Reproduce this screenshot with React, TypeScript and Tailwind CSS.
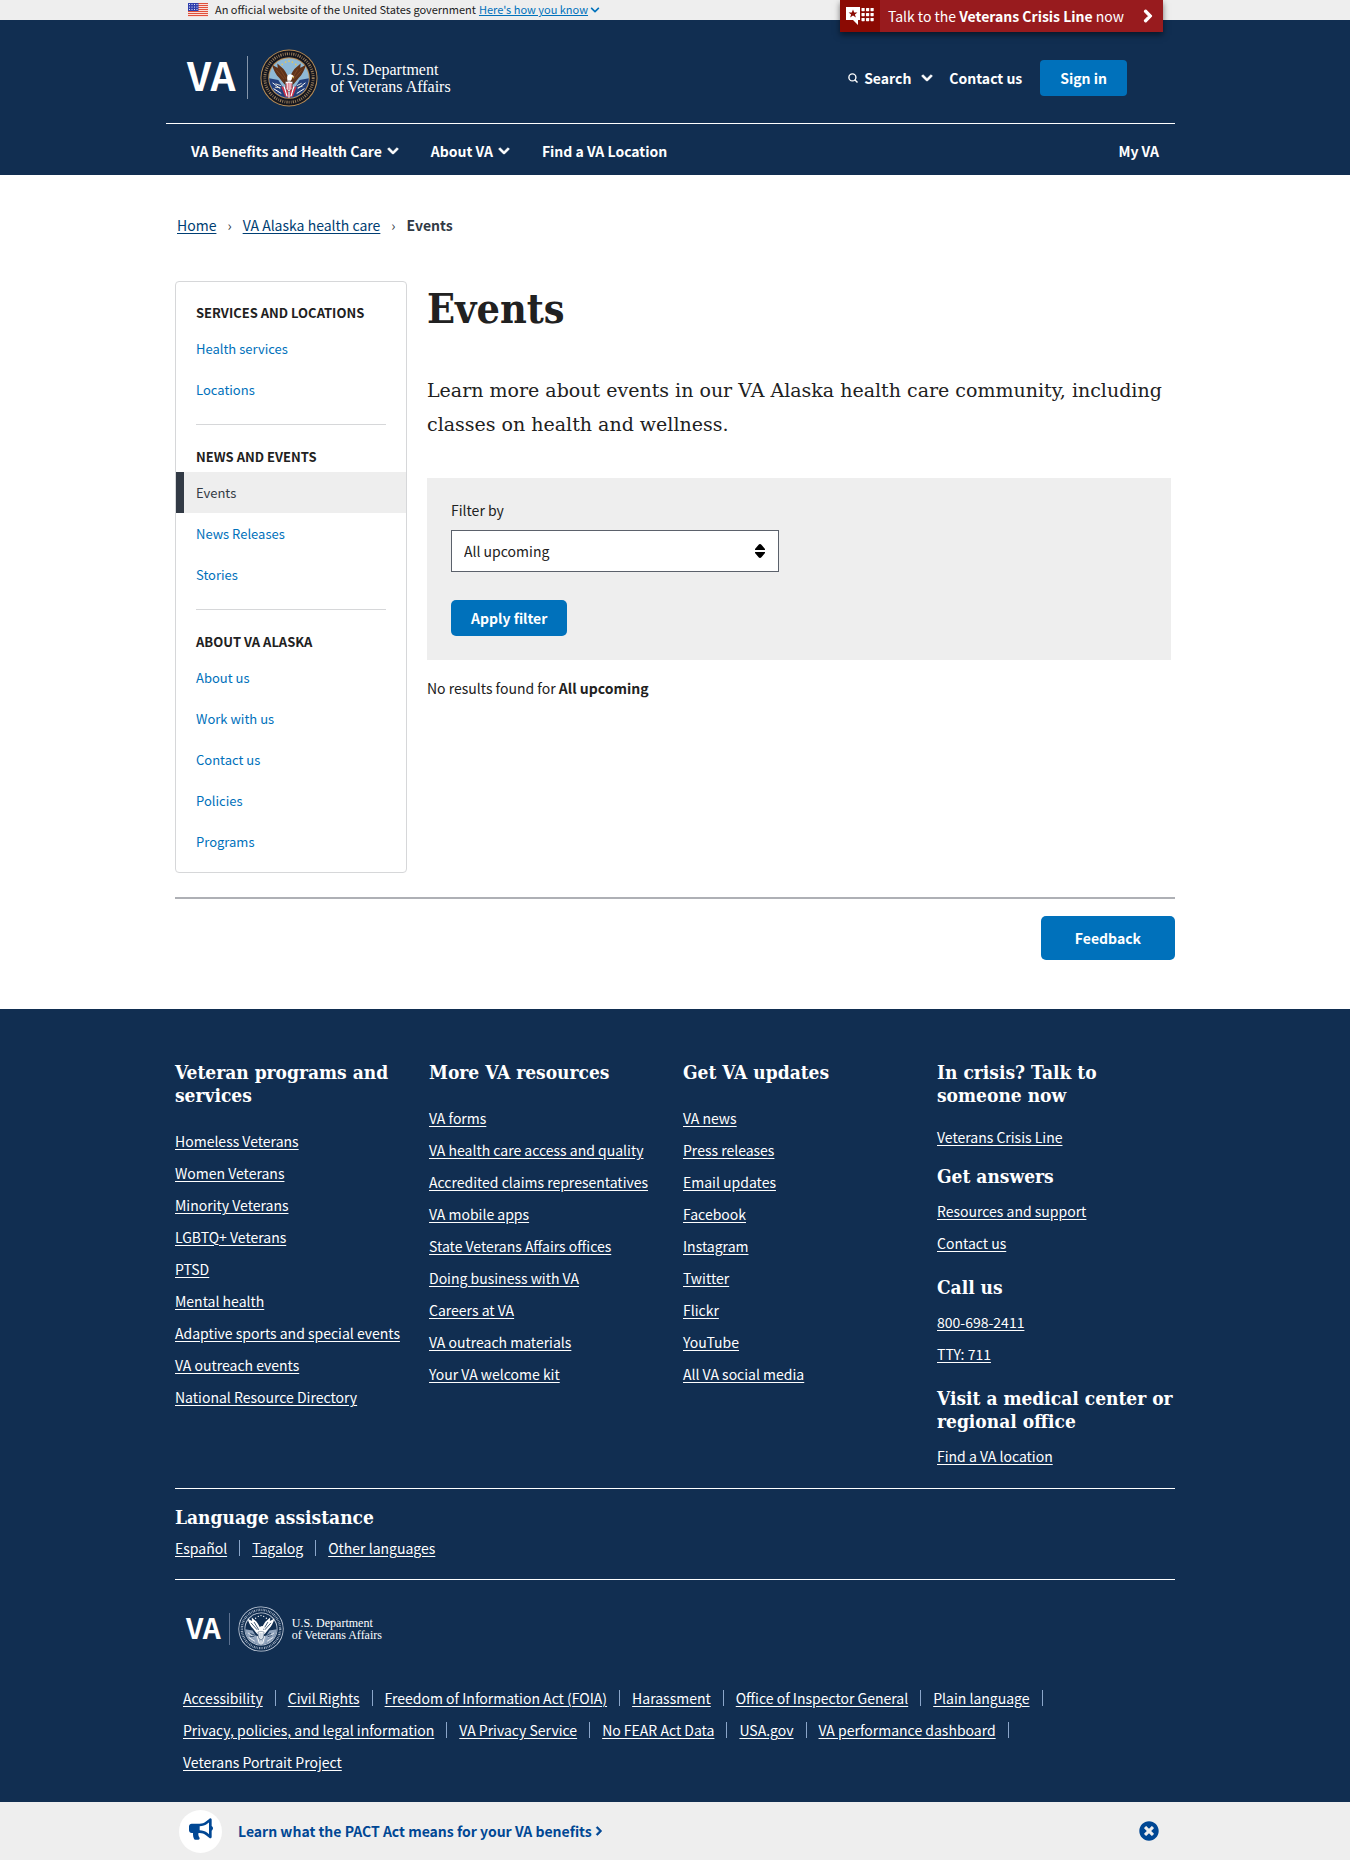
import React from "react";
import { FaBullhorn, FaChevronDown, FaChevronRight, FaTimesCircle } from "react-icons/fa";

const sidebar = [
  { title: "Services and locations", links: ["Health services", "Locations"] },
  { title: "News and events", links: ["Events", "News Releases", "Stories"] },
  {
    title: "About VA Alaska",
    links: ["About us", "Work with us", "Contact us", "Policies", "Programs"],
  },
];

const footerColumns = [
  {
    title: "Veteran programs and services",
    links: [
      "Homeless Veterans",
      "Women Veterans",
      "Minority Veterans",
      "LGBTQ+ Veterans",
      "PTSD",
      "Mental health",
      "Adaptive sports and special events",
      "VA outreach events",
      "National Resource Directory",
    ],
  },
  {
    title: "More VA resources",
    links: [
      "VA forms",
      "VA health care access and quality",
      "Accredited claims representatives",
      "VA mobile apps",
      "State Veterans Affairs offices",
      "Doing business with VA",
      "Careers at VA",
      "VA outreach materials",
      "Your VA welcome kit",
    ],
  },
  {
    title: "Get VA updates",
    links: [
      "VA news",
      "Press releases",
      "Email updates",
      "Facebook",
      "Instagram",
      "Twitter",
      "Flickr",
      "YouTube",
      "All VA social media",
    ],
  },
];

const contactGroups = [
  { title: "In crisis? Talk to someone now", links: ["Veterans Crisis Line"] },
  { title: "Get answers", links: ["Resources and support", "Contact us"] },
  { title: "Call us", links: ["800-698-2411", "TTY: 711"] },
  { title: "Visit a medical center or regional office", links: ["Find a VA location"] },
];

const legalLinks = [
  "Accessibility",
  "Civil Rights",
  "Freedom of Information Act (FOIA)",
  "Harassment",
  "Office of Inspector General",
  "Plain language",
  "Privacy, policies, and legal information",
  "VA Privacy Service",
  "No FEAR Act Data",
  "USA.gov",
  "VA performance dashboard",
  "Veterans Portrait Project",
];

const languages = ["Español", "Tagalog", "Other languages"];

function Flag() {
  return (
    <svg viewBox="0 0 20 14" className="h-[14px] w-5" aria-hidden="true">
      <rect width="20" height="14" fill="#fff" />
      {[0, 2, 4, 6, 8, 10, 12].map((y) => (
        <rect key={y} y={y} width="20" height="1.2" fill="#e0503a" />
      ))}
      <rect width="10.5" height="8" fill="#2f3fae" />
      {[1.5, 4, 6.5].map((y) =>
        [1.5, 4, 6.5, 9].map((x) => <circle key={`${x}-${y}`} cx={x} cy={y} r="0.55" fill="#fff" />),
      )}
    </svg>
  );
}

const sealColors = {
  color: {
    rim: "#b98d55",
    ring: "#14161f",
    text: "#b59468",
    field: "#8fb9d6",
    wing: "#5f3219",
    feather: "#7d4722",
    dark: "#2a1a14",
    red: "#c9344b",
    blue: "#23407c",
    gold: "#e5c65c",
    pole: "#e8e3d2",
  },
  mono: {
    rim: "#cfd7e3",
    ring: "#112e51",
    text: "#cfd7e3",
    field: "#112e51",
    wing: "#ffffff",
    feather: "#112e51",
    dark: "#112e51",
    red: "#9fb0c6",
    blue: "#8fa2bb",
    gold: "#ffffff",
    pole: "#112e51",
  },
};

function Seal({ tone, className }: { tone: "color" | "mono"; className: string }) {
  const c = sealColors[tone];
  return (
    <svg viewBox="0 0 120 120" className={className} aria-hidden="true">
      <defs>
        <clipPath id={`seal-${tone}`}>
          <circle cx="60" cy="60" r="41" />
        </clipPath>
      </defs>
      <circle cx="60" cy="60" r="59" fill={c.rim} />
      <circle cx="60" cy="60" r="57" fill={c.ring} />
      <circle
        cx="60"
        cy="60"
        r="50"
        fill="none"
        stroke={c.text}
        strokeWidth="6"
        strokeDasharray="2.5 2.5 1.5 2.8 2 2.2"
        opacity="0.8"
      />
      <circle cx="60" cy="60" r="43" fill={c.rim} />
      <circle cx="60" cy="60" r="41" fill={c.field} />
      <g clipPath={`url(#seal-${tone})`}>
        <path d="M16 60l22 4 10 16 12 10v14H34L16 86z" fill={c.blue} />
        <path d="M104 60l-22 4-10 16-12 10v14h26l18-18z" fill={c.blue} />
        <path d="M26 70l16 12M28 82l16 10M94 70L78 82M92 82L76 92" stroke="#fff" strokeWidth="2" />
        <path d="M46 78l8 20M54 76l4 24M66 76l-4 24M74 78l-8 20" stroke={c.red} strokeWidth="4" />
        <path d="M50 78l6 20M60 76v26M70 78l-6 20" stroke="#fff" strokeWidth="2.5" />
        <circle cx="46" cy="32" r="1.8" fill={c.gold} />
        <circle cx="53" cy="27" r="1.8" fill={c.gold} />
        <circle cx="60" cy="25" r="1.8" fill={c.gold} />
        <circle cx="67" cy="27" r="1.8" fill={c.gold} />
        <circle cx="74" cy="32" r="1.8" fill={c.gold} />
      </g>
      <path
        d="M60 80C52 76 46 68 40 60c-7-7-12-15-15-28 5 4 8 5 12 7-1-4-1-6-1-9 6 6 12 9 16 16 3 5 5 9 8 14 3-5 5-9 8-14 4-7 10-10 16-16 0 3 0 5-1 9 4-2 7-3 12-7-3 13-8 21-15 28-6 8-12 16-20 20z"
        fill={c.wing}
      />
      <path d="M34 44l16 18M42 42l12 20M86 44L70 62M78 42L66 62" stroke={c.feather} strokeWidth="2" />
      <path d="M56 60c0-6 3-8 7-8 3 0 5 2 8 5l-5 1c1 4-1 7-4 9h-5z" fill="#fff" />
      <path d="M71 57l-5 1 3 3z" fill={c.gold} />
      <path d="M52 68l8-2 8 2-2 14-6 7-6-7z" fill="#fff" stroke={c.dark} strokeWidth="1" />
      <path d="M55 71v11M58.500 70v15M62 70v15M65 71v11" stroke={c.red} strokeWidth="1.5" />
      <path d="M76 76l10-5M78 80l10-3M44 76l-12-4M42 80l-11-1" stroke={c.pole} strokeWidth="2" />
    </svg>
  );
}

function CrisisIcon() {
  return (
    <svg viewBox="0 0 28 18" className="h-[18px] w-7" aria-hidden="true">
      <path d="M0 0h14v13h-2v5l-5-5H0z" fill="#fff" />
      <path d="M7 2.4l1.2 3h3.2L8.9 7.4l1 3.1L7 8.6l-2.9 1.9 1-3.1-2.5-2h3.2z" fill="#8b0a03" />
      {[1, 6, 11].map((y) =>
        [15.5, 20, 24.5].map((x) => (
          <rect key={`${x}-${y}`} x={x} y={y} width="3.2" height="3.2" rx="0.6" fill="#fff" />
        )),
      )}
    </svg>
  );
}

function SortIcon() {
  return (
    <svg viewBox="0 0 10 14" className="h-[14px] w-[10px]" aria-hidden="true">
      <path
        d="M5 0c.6 0 1 .3 1.4.7L10 5c.2.6 0 1-.5 1h-9C0 6-.2 5.6 0 5L3.600.7C4 .3 4.400 0 5 0zM5 14c.6 0 1-.3 1.400-.7L10 9c.2-.6 0-1-.5-1h-9C0 8-.2 8.400 0 9l3.600 4.300c.4.4.8.7 1.400.7z"
        fill="#000"
      />
    </svg>
  );
}

function SearchIcon() {
  return (
    <svg viewBox="0 0 10 10" className="size-[10px]" fill="none" stroke="#fff" strokeWidth="1.4" aria-hidden="true">
      <circle cx="4.4" cy="4.4" r="3.5" />
      <path d="M6.800 6.800L9.500 9.500" />
    </svg>
  );
}

function FooterHeading({ children }: { children: React.ReactNode }) {
  return (
    <h2 className="font-['DejaVu_Serif_Condensed','DejaVu_Serif',serif] text-[19px] leading-[23px] font-bold">
      {children}
    </h2>
  );
}

function FooterLink({ children }: { children: React.ReactNode }) {
  return (
    <a href="#" className="leading-8 whitespace-nowrap underline underline-offset-2">
      {children}
    </a>
  );
}

function PipeList({ items }: { items: string[] }) {
  return (
    <ul className="flex flex-wrap">
      {items.map((item, i) => (
        <li key={item} className="flex items-center">
          <FooterLink>{item}</FooterLink>
          {i < items.length - 1 && <span className="mx-3 h-4 w-px bg-[#8ba6ca]" />}
        </li>
      ))}
    </ul>
  );
}

export default function App() {
  return (
    <div className="min-h-screen bg-white font-['Noto_Sans_CJK_SC',sans-serif] text-sm text-[#323a45]">
      <header className="bg-[#112e51] text-white">
        <div className="h-5 bg-[#eeeeee] text-[#212121]">
          <div className="mx-auto flex max-w-[1000px] items-start justify-between pr-3 pl-[13px]">
            <div className="flex h-5 items-center text-[11px]">
              <Flag />
              <span className="ml-[7px]">An official website of the United States government</span>
              <button type="button" className="ml-[3px] flex items-center text-[#0071bb]">
                <span className="underline">Here's how you know</span>
                <FaChevronDown className="ml-0.5 size-[10px]" />
              </button>
            </div>
            <a
              href="#"
              className="flex h-8 items-stretch bg-[#981b1e] text-white shadow-[0_3px_6px_rgba(0,0,0,0.5)]"
            >
              <span className="flex w-10 items-center bg-[#8b0a03] pl-1.5">
                <CrisisIcon />
              </span>
              <span className="flex items-center pr-[17px] pl-2 whitespace-pre">
                Talk to the <b>Veterans Crisis Line</b> now
              </span>
              <span className="flex items-center pr-2">
                <FaChevronRight className="size-[14px]" stroke="currentColor" strokeWidth="40" />
              </span>
            </a>
          </div>
        </div>

        <div className="mx-auto max-w-[1018px]">
          <div className="mr-[9px] flex h-[104px] items-center justify-between border-b border-white pt-3 pr-12 pl-[21px]">
            <a href="#" className="flex items-center" aria-label="VA, U.S. Department of Veterans Affairs">
              <span className="pb-1.5 text-[39px] leading-none font-bold">VA</span>
              <span className="ml-3 h-[43px] w-px bg-[#8596ab]" />
              <Seal tone="color" className="ml-3 size-[58px]" />
              <span className="ml-3 font-['Liberation_Serif',serif] text-base leading-[17px]">
                U.S. Department
                <br />
                of Veterans Affairs
              </span>
            </a>
            <div className="flex items-center font-bold">
              <button type="button" className="flex items-center gap-1.5">
                <SearchIcon />
                Search
                <FaChevronDown className="ml-1 size-3" stroke="currentColor" strokeWidth="40" />
              </button>
              <a href="#" className="ml-4">
                Contact us
              </a>
              <button type="button" className="ml-[18px] h-9 rounded-[4px] bg-[#0071bb] px-5">
                Sign in
              </button>
            </div>
          </div>
          <nav className="mr-[9px] flex h-[51px] items-center pt-0.5 pr-4 pl-[25px] font-bold">
            <button type="button" className="flex items-center">
              VA Benefits and Health Care
              <FaChevronDown className="ml-[5px] size-3" stroke="currentColor" strokeWidth="40" />
            </button>
            <button type="button" className="ml-8 flex items-center">
              About VA
              <FaChevronDown className="ml-[5px] size-3" stroke="currentColor" strokeWidth="40" />
            </button>
            <a href="#" className="ml-8">
              Find a VA Location
            </a>
            <a href="#" className="ml-auto">
              My VA
            </a>
          </nav>
        </div>
      </header>

      <div className="mx-auto max-w-[1000px]">
        <nav aria-label="Breadcrumb" className="flex h-[106px] items-center pb-1.5 pl-0.5">
          <a href="#" className="text-[#003e73] underline underline-offset-2">
            Home
          </a>
          <span className="mx-[11px]">›</span>
          <a href="#" className="text-[#003e73] underline underline-offset-2">
            VA Alaska health care
          </a>
          <span className="mx-[11px]">›</span>
          <b>Events</b>
        </nav>

        <div className="flex items-start gap-5">
          <nav
            aria-label="Section"
            className="w-[232px] shrink-0 rounded-[4px] border border-[#d6d7d9] pb-2.5 text-[13px]"
          >
            {sidebar.map((group, g) => (
              <section key={group.title}>
                {g > 0 && <hr className="mx-5 mt-[14px] border-[#d6d7d9]" />}
                <h2
                  className={`px-5 text-[13px] leading-4 font-bold text-[#212121] uppercase ${g > 0 ? "mt-6" : "mt-[23px]"} mb-[7px]`}
                >
                  {group.title}
                </h2>
                <ul>
                  {group.links.map((link) => (
                    <li key={link}>
                      <a
                        href="#"
                        className={
                          link === "Events"
                            ? "block border-l-8 border-[#323a45] bg-[#eeeeee] pl-3 leading-[41px]"
                            : "block pl-5 leading-[41px] text-[#0071bb]"
                        }
                      >
                        {link}
                      </a>
                    </li>
                  ))}
                </ul>
              </section>
            ))}
          </nav>

          <main className="mr-1 flex-1 text-[#212121]">
            <h1 className="font-['DejaVu_Serif_Condensed','DejaVu_Serif',serif] text-[41px] leading-[56px] font-bold">
              Events
            </h1>
            <p className="mt-9 font-['DejaVu_Serif',serif] text-[19px] leading-[34px]">
              Learn more about events in our VA Alaska health care community, including classes on health and wellness.
            </p>
            <form className="mt-[37px] bg-[#eeeeee] px-6 pt-5 pb-6" onSubmit={(e) => e.preventDefault()}>
              <label htmlFor="filter" className="block leading-6">
                Filter by
              </label>
              <div className="relative mt-2 max-w-[328px]">
                <select
                  id="filter"
                  className="block h-[42px] w-full appearance-none border border-[#5b616b] bg-white px-3 leading-6"
                >
                  <option>All upcoming</option>
                </select>
                <span className="pointer-events-none absolute inset-y-0 right-[14px] flex items-center">
                  <SortIcon />
                </span>
              </div>
              <button type="submit" className="mt-7 h-9 rounded-[5px] bg-[#0071bb] px-5 font-bold text-white">
                Apply filter
              </button>
            </form>
            <p className="mt-4 leading-6">
              No results found for <b>All upcoming</b>
            </p>
          </main>
        </div>

        <div className="mt-6 flex justify-end border-t-2 border-[#aeb0b5] pt-[17px] pb-[49px]">
          <button type="button" className="h-11 rounded-[5px] bg-[#0071bb] px-[34px] font-bold text-white">
            Feedback
          </button>
        </div>
      </div>

      <footer className="bg-[#112e51] text-white">
        <div className="mx-auto max-w-[1000px] pt-[52px] pb-6">
          <div className="grid grid-cols-4 gap-x-4">
            {footerColumns.map((col) => (
              <section key={col.title}>
                <FooterHeading>{col.title}</FooterHeading>
                <ul className="mt-[18px]">
                  {col.links.map((link) => (
                    <li key={link} className="h-8">
                      <FooterLink>{link}</FooterLink>
                    </li>
                  ))}
                </ul>
              </section>
            ))}
            <div className="flex flex-col gap-[17px]">
              {contactGroups.map((group, g) => (
                <section key={group.title}>
                  <FooterHeading>{group.title}</FooterHeading>
                  <ul className={g === 0 ? "mt-[14px] -mb-[5px]" : "mt-[7px]"}>
                    {group.links.map((link) => (
                      <li key={link} className="h-8">
                        <FooterLink>{link}</FooterLink>
                      </li>
                    ))}
                  </ul>
                </section>
              ))}
            </div>
          </div>

          <section className="mt-4 border-y border-white pt-[17px] pb-[15px]">
            <FooterHeading>Language assistance</FooterHeading>
            <div className="mt-[3px]">
              <PipeList items={languages} />
            </div>
          </section>

          <a
            href="#"
            className="mt-[26px] flex items-center pl-[11px]"
            aria-label="VA, U.S. Department of Veterans Affairs"
          >
            <span className="pb-1 text-[28px] leading-none font-bold">VA</span>
            <span className="ml-2 h-8 w-px bg-[#5c7190]" />
            <Seal tone="mono" className="ml-2 size-[46px]" />
            <span className="ml-2 font-['Liberation_Serif',serif] text-xs leading-3">
              U.S. Department
              <br />
              of Veterans Affairs
            </span>
          </a>

          <div className="mt-[30px] pr-10 pl-2">
            <PipeList items={legalLinks} />
          </div>
        </div>
      </footer>

      <aside className="bg-[#eeeeee]">
        <div className="mx-auto flex h-[58px] max-w-[1000px] items-center pr-4 pl-1">
          <span className="flex size-[43px] items-center justify-center rounded-full bg-white pb-1">
            <FaBullhorn className="size-6 text-[#004794]" />
          </span>
          <a href="#" className="ml-4 flex items-center font-bold text-[#004794]">
            Learn what the PACT Act means for your VA benefits
            <FaChevronRight className="ml-0.5 size-[10px]" stroke="currentColor" strokeWidth="40" />
          </a>
          <button type="button" aria-label="Close" className="ml-auto text-[#004794]">
            <FaTimesCircle className="size-5" />
          </button>
        </div>
      </aside>
    </div>
  );
}
